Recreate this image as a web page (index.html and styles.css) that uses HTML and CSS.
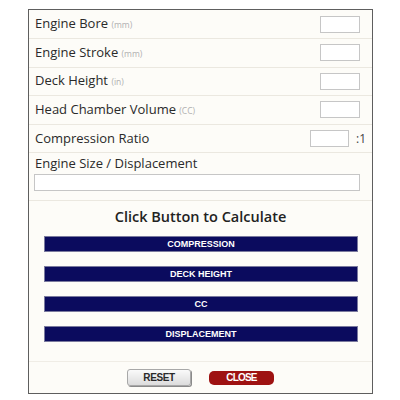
FILE: index.html
```html
<!DOCTYPE html>
<html>
<head>
<meta charset="utf-8">
<link rel="stylesheet" href="styles.css">
</head>
<body>
<div class="panel">
  <div class="row first">
    <label class="label">Engine Bore <span class="unit">(mm)</span></label>
    <input class="box" type="text">
  </div>
  <div class="row">
    <label class="label">Engine Stroke <span class="unit">(mm)</span></label>
    <input class="box" type="text">
  </div>
  <div class="row">
    <label class="label">Deck Height <span class="unit">(in)</span></label>
    <input class="box" type="text">
  </div>
  <div class="row">
    <label class="label">Head Chamber Volume <span class="unit">(CC)</span></label>
    <input class="box" type="text">
  </div>
  <div class="row ratio-row">
    <label class="label">Compression Ratio</label>
    <div class="ratio">
      <input class="box ratio-box" type="text">
      <span class="suffix">:1</span>
    </div>
  </div>
  <div class="row-wide">
    <label class="label">Engine Size / Displacement</label>
    <input class="wide-box" type="text">
  </div>
  <div class="calc">
    <div class="calc-title">Click Button to Calculate</div>
    <div class="bars">
      <button class="bar">COMPRESSION</button>
      <button class="bar">DECK HEIGHT</button>
      <button class="bar">CC</button>
      <button class="bar">DISPLACEMENT</button>
    </div>
  </div>
  <div class="footer">
    <button class="reset">RESET</button>
    <button class="close">CLOSE</button>
  </div>
</div>
</body>
</html>
```

FILE: styles.css
```css
html, body {
  margin: 0;
  padding: 0;
  background: #ffffff;
}
body {
  font-family: "Open Sans", "Liberation Sans", sans-serif;
  color: #2a2a2a;
}
.panel {
  margin: 9px 0 0 28px;
  width: 343px;
  height: 383px;
  border: 1px solid #5e5e5e;
  background: #fdfcf8;
  display: flex;
  flex-direction: column;
}
.row {
  box-sizing: border-box;
  height: 28.5px;
  border-bottom: 1px solid #ebe8e0;
  display: flex;
  align-items: center;
  justify-content: space-between;
  padding: 0 12px 0 6px;
}
.row.first {
  height: 29px;
}
.row.ratio-row {
  padding-right: 5px;
}
.label {
  font-size: 13px;
  color: #2a2a2a;
  line-height: 18px;
}
.unit {
  font-size: 8.5px;
  color: #b0b0b0;
}
.box {
  box-sizing: border-box;
  width: 40px;
  height: 17px;
  border: 1px solid #c6c6c6;
  background: #fff;
  margin: 0;
  padding: 0;
}
.ratio {
  display: flex;
  align-items: center;
}
.ratio-box {
  width: 39px;
}
.suffix {
  font-size: 12px;
  color: #444;
  margin-left: 7px;
  width: 11px;
}
.row-wide {
  box-sizing: border-box;
  height: 48px;
  border-bottom: 1px solid #ebe8e0;
  padding: 1px 12px 0 5px;
  display: flex;
  flex-direction: column;
}
.row-wide .label {
  padding-left: 1px;
}
.wide-box {
  box-sizing: border-box;
  margin: 2px 0 0 0;
  width: 326px;
  height: 17px;
  border: 1px solid #c6c6c6;
  background: #fff;
  padding: 0;
}
.calc {
  box-sizing: border-box;
  height: 161px;
  border-bottom: 1px solid #f0ede6;
  padding-top: 6px;
}
.calc-title {
  text-align: center;
  font-size: 14.5px;
  font-weight: 600;
  color: #222;
  line-height: 20px;
}
.bars {
  margin: 9px 14px 0 15px;
  display: flex;
  flex-direction: column;
  gap: 14px;
}
.bar {
  box-sizing: border-box;
  height: 16px;
  width: 100%;
  margin: 0;
  padding: 0;
  border: 1px solid #7a7a9e;
  background: #0b0b5e;
  color: #fff;
  font-family: "Liberation Sans", Arial, sans-serif;
  font-weight: bold;
  font-size: 9px;
  line-height: 14px;
  text-align: center;
}
.footer {
  flex: 1;
  display: flex;
  align-items: center;
  justify-content: center;
  gap: 18px;
}
.reset {
  box-sizing: border-box;
  width: 64px;
  height: 17px;
  margin: 0;
  padding: 0;
  border: 1px solid #a8a8a8;
  border-radius: 3px;
  background: linear-gradient(#fafafa, #dcdcdc);
  box-shadow: 1px 1px 0 #8a8a8a;
  font-family: "Liberation Sans", Arial, sans-serif;
  font-weight: bold;
  font-size: 10px;
  letter-spacing: -0.4px;
  color: #2a2a2a;
}
.close {
  box-sizing: border-box;
  width: 65px;
  height: 14px;
  margin: 0;
  padding: 0;
  border: none;
  border-radius: 5px;
  background: #9e1212;
  font-family: "Liberation Sans", Arial, sans-serif;
  font-weight: bold;
  font-size: 10px;
  letter-spacing: -0.8px;
  color: #fff;
  line-height: 14px;
}
```
